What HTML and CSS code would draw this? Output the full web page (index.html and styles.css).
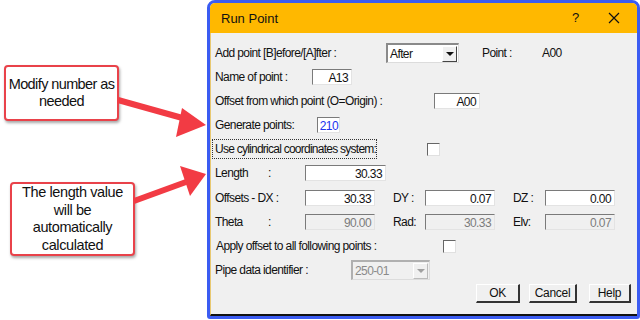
FILE: index.html
```html
<!DOCTYPE html>
<html lang="en">
<head>
    <meta charset="UTF-8">
    <title>Run Point</title>
    <link rel="stylesheet" href="styles.css">
</head>
<body>
    <div class="callout callout-one">Modify number as<br>needed</div>
    <div class="callout callout-two">The length value<br>will be<br>automatically<br>calculated</div>

    <svg class="arrows" width="640" height="320" viewBox="0 0 640 320">
        <line x1="118" y1="100" x2="186" y2="119" stroke="#f23b44" stroke-width="6"/>
        <polygon points="206,125 182,108 176,137" fill="#f23b44"/>
        <line x1="134" y1="201" x2="186" y2="182" stroke="#f23b44" stroke-width="6"/>
        <polygon points="206,174 180,166 190,196" fill="#f23b44"/>
    </svg>

    <div class="dialog">
        <div class="titlebar">
            <span class="title">Run Point</span>
            <span class="help-btn">?</span>
            <svg class="close-btn" width="12" height="12" viewBox="0 0 12 12">
                <path d="M1 1 L11 11 M11 1 L1 11" stroke="#111" stroke-width="1.2" fill="none"/>
            </svg>
        </div>
        <div class="content">
            <div class="row">
                <span class="label w171">Add point [B]efore/[A]fter :</span>
                <div class="combo">
                    <span class="combo-value">After</span>
                    <span class="combo-arrow"></span>
                </div>
                <span class="label point-label">Point :</span>
                <span class="label">A00</span>
            </div>
            <div class="row">
                <span class="label w97">Name of point :</span>
                <span class="field w40">A13</span>
            </div>
            <div class="row">
                <span class="label w219">Offset from which point (O=Origin) :</span>
                <span class="field w46">A00</span>
            </div>
            <div class="row">
                <span class="label w102">Generate points:</span>
                <span class="field w23 blue">210</span>
            </div>
            <div class="row">
                <span class="focus-label">Use cylindrical coordinates system:</span>
                <span class="checkbox cyl-check"></span>
            </div>
            <div class="row">
                <span class="label w53">Length</span>
                <span class="label w37">:</span>
                <span class="field w81">30.33</span>
            </div>
            <div class="row gap-top">
                <span class="label w90">Offsets - DX :</span>
                <span class="field w70">30.33</span>
                <span class="label sub-label">DY :</span>
                <span class="field w70">0.07</span>
                <span class="label sub-label">DZ :</span>
                <span class="field w70">0.00</span>
            </div>
            <div class="row">
                <span class="label w53">Theta</span>
                <span class="label w37">:</span>
                <span class="field w70 disabled">90.00</span>
                <span class="label sub-label">Rad:</span>
                <span class="field w70 disabled">30.33</span>
                <span class="label sub-label">Elv:</span>
                <span class="field w70 disabled">0.07</span>
            </div>
            <div class="row">
                <span class="label w227 indent">Apply offset to all following points :</span>
                <span class="checkbox"></span>
            </div>
            <div class="row">
                <span class="label w136">Pipe data identifier :</span>
                <div class="combo combo-disabled">
                    <span class="combo-value">250-01</span>
                    <span class="combo-arrow"></span>
                </div>
            </div>
            <div class="row buttons">
                <button class="btn btn-ok">OK</button>
                <button class="btn btn-cancel">Cancel</button>
                <button class="btn btn-help">Help</button>
            </div>
        </div>
    </div>
</body>
</html>
```

FILE: styles.css
```css
body {
    margin: 0;
    width: 640px;
    height: 320px;
    background-color: #fff;
    font-family: 'Liberation Sans', Arial, sans-serif;
    position: relative;
    overflow: hidden;
}
.callout {
    position: absolute;
    background-color: #fff;
    border: 2px solid #e9424a;
    border-radius: 4px;
    box-shadow: 1px 2px 3px rgba(0, 0, 0, 0.35);
    font-size: 14.5px;
    line-height: 17px;
    text-align: center;
    color: #111;
    display: flex;
    align-items: center;
    justify-content: center;
    box-sizing: border-box;
    white-space: nowrap;
}
.callout-one {
    left: 4px;
    top: 65px;
    width: 115px;
    height: 56px;
    letter-spacing: -0.6px;
}
.callout-two {
    left: 10px;
    top: 182px;
    width: 125px;
    height: 74px;
    line-height: 17.5px;
    letter-spacing: -0.4px;
}
.arrows {
    position: absolute;
    left: 0;
    top: 0;
    z-index: 2;
}
.dialog {
    position: absolute;
    left: 207px;
    top: 0;
    width: 433px;
    height: 319px;
    box-sizing: border-box;
    border: 3px solid #3b5cf2;
    border-radius: 8px 8px 3px 3px;
    background-color: #f0f0f0;
    display: flex;
    flex-direction: column;
    overflow: hidden;
}
.titlebar {
    height: 30px;
    background-color: #ffb800;
    display: flex;
    align-items: center;
    font-size: 13px;
    color: #111;
    flex-shrink: 0;
}
.title {
    margin-left: 11px;
    flex: 1;
}
.help-btn {
    width: 36px;
    font-size: 13px;
    margin-top: -1px;
}
.close-btn {
    margin-right: 17px;
}
.content {
    flex: 1;
    border-left: 1px solid #e8c870;
    border-bottom: 2px solid #111;
    padding: 8px 0 0 4px;
}
.row {
    display: flex;
    align-items: center;
    height: 24px;
    font-size: 12px;
    color: #111;
    letter-spacing: -0.6px;
    white-space: nowrap;
}
.gap-top {
    margin-top: 1px;
}
.label {
    display: inline-block;
}
.w171 { width: 171px; }
.w97 { width: 97px; }
.w219 { width: 219px; }
.w102 { width: 102px; }
.w53 { width: 53px; }
.w37 { width: 37px; }
.w90 { width: 90px; }
.w227 { width: 227px; }
.w136 { width: 136px; }
.indent {
    padding-left: 1px;
}
.point-label {
    margin-left: 23px;
    width: 60px;
}
.sub-label {
    width: 32px;
    margin-left: 18px;
}
.field {
    display: inline-block;
    height: 16px;
    line-height: 16px;
    box-sizing: border-box;
    background-color: #fff;
    border-top: 1px solid #7a7a7a;
    border-left: 1px solid #7a7a7a;
    border-right: 1px solid #e3e3e3;
    border-bottom: 1px solid #e3e3e3;
    text-align: right;
    padding-right: 3px;
    font-size: 12px;
}
.w40 { width: 40px; }
.w46 { width: 46px; }
.w23 { width: 23px; padding-right: 1px; }
.w81 { width: 81px; }
.w70 { width: 70px; }
.blue {
    color: #2233ee;
}
.disabled {
    background-color: #f0f0f0;
    color: #7c7c7c;
}
.combo {
    display: flex;
    align-items: center;
    width: 73px;
    height: 20px;
    box-sizing: border-box;
    background-color: #fff;
    border-top: 2px solid #8a8a8a;
    border-left: 2px solid #8a8a8a;
    border-right: 1px solid #dcdcdc;
    border-bottom: 1px solid #dcdcdc;
    padding: 0 1px 0 0;
}
.combo-value {
    flex: 1;
    padding-left: 2px;
}
.combo-arrow {
    width: 15px;
    height: 16px;
    background-color: #f0f0f0;
    border-top: 1px solid #fff;
    border-left: 1px solid #fff;
    border-right: 1px solid #444;
    border-bottom: 1px solid #444;
    box-sizing: border-box;
    display: flex;
    align-items: center;
    justify-content: center;
}
.combo-arrow::after {
    content: "";
    border-left: 4px solid transparent;
    border-right: 4px solid transparent;
    border-top: 4px solid #111;
}
.combo-disabled {
    width: 79px;
    background-color: #f0f0f0;
    color: #8a8a8a;
    border-top-color: #b0b0b0;
    border-left-color: #b0b0b0;
}
.combo-disabled .combo-arrow {
    border-right-color: #bbb;
    border-bottom-color: #bbb;
}
.combo-disabled .combo-arrow::after {
    border-top-color: #a0a0a0;
}
.focus-label {
    display: inline-block;
    box-sizing: border-box;
    width: 165px;
    border: 1px dotted #333;
    padding: 2px 2px;
    margin-left: -3px;
    letter-spacing: -0.75px;
}
.checkbox {
    display: inline-block;
    width: 11px;
    height: 11px;
    background-color: #fff;
    border-top: 1px solid #666;
    border-left: 1px solid #666;
    border-right: 1px solid #e0e0e0;
    border-bottom: 1px solid #e0e0e0;
}
.cyl-check {
    margin-left: 50px;
}
.buttons {
    justify-content: flex-end;
    padding-right: 6px;
    height: 22px;
}
.btn {
    height: 19px;
    font-family: 'Liberation Sans', Arial, sans-serif;
    font-size: 12px;
    letter-spacing: -0.3px;
    background-color: #f0f0f0;
    color: #111;
    border-top: 1px solid #fff;
    border-left: 1px solid #fff;
    border-right: 2px solid #333;
    border-bottom: 2px solid #333;
    padding: 0;
    margin: 0;
}
.btn-ok { width: 44px; margin-right: 9px; }
.btn-cancel { width: 48px; margin-right: 12px; }
.btn-help { width: 42px; }
```
